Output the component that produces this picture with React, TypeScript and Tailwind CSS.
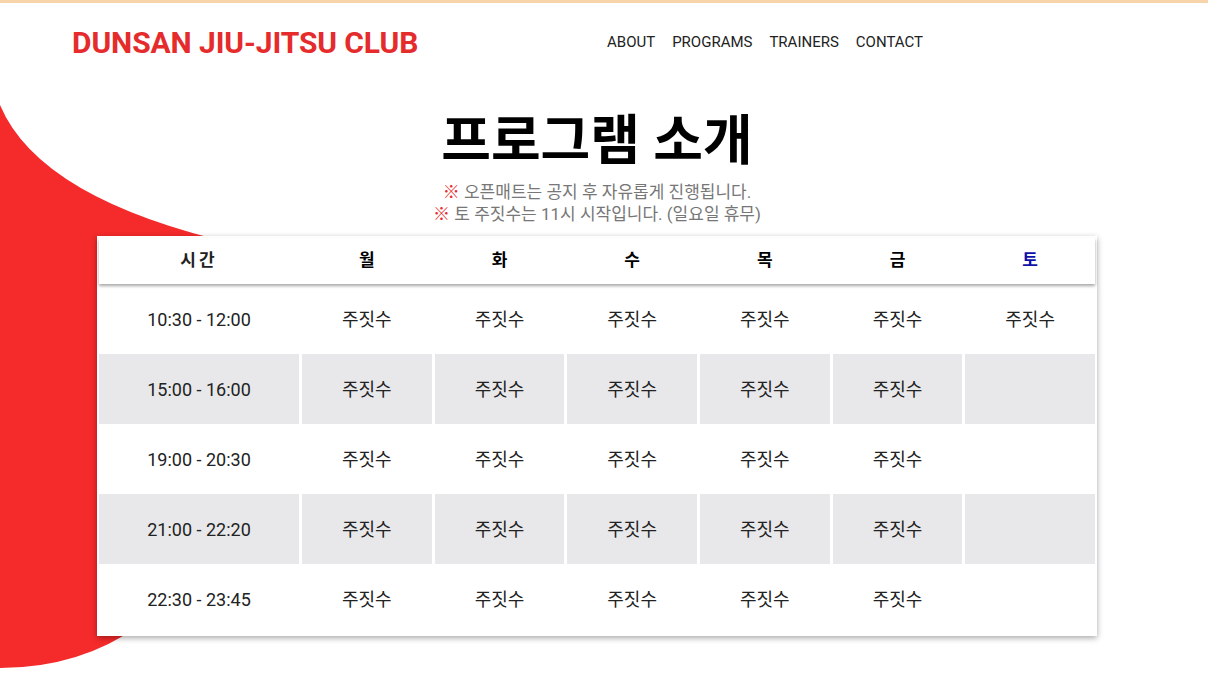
import React from 'react';

const days = ['월', '화', '수', '목', '금', '토'];

const rows: { time: string; sat: boolean }[] = [
  { time: '10:30 - 12:00', sat: true },
  { time: '15:00 - 16:00', sat: false },
  { time: '19:00 - 20:30', sat: false },
  { time: '21:00 - 22:20', sat: false },
  { time: '22:30 - 23:45', sat: false },
];

const font = { fontFamily: 'Roboto, "Noto Sans CJK KR", sans-serif' };

export default function App() {
  return (
    <div
      className="relative min-h-[689px] w-full overflow-hidden border-t-[3px] border-[#f6d3a8] bg-white text-[#222]"
      style={font}
    >
      {/* red blob behind the table */}
      <svg
        className="absolute left-0 top-[-3px]"
        width="320"
        height="689"
        viewBox="0 0 320 689"
      >
        <path
          d="M0 105 Q40 200 240 245 L320 245 L320 610 L140 625 Q80 668 0 668 Z"
          fill="#f52a2a"
        />
      </svg>

      <div className="relative w-[1194px]">
        <header className="grid h-[78px] grid-cols-[607px_1fr] items-center">
          <h1 className="pl-[72px] text-[30px] font-bold tracking-[-0.1px] text-[#e52b2b]">
            DUNSAN JIU-JITSU CLUB
          </h1>
          <nav className="flex items-center gap-[17px] text-[15px] text-[#222]">
            <a>ABOUT</a>
            <a>PROGRAMS</a>
            <a>TRAINERS</a>
            <a>CONTACT</a>
          </nav>
        </header>

        <section className="flex flex-col items-center">
          <h2 className="mt-[30px] text-[54px] font-bold leading-[62px] text-black">
            프로그램 소개
          </h2>
          <div className="mt-[8px] text-center text-[17px] leading-[22px] text-[#777]">
            <p>
              <span className="text-[#e52b2b]">※</span> 오픈매트는 공지 후 자유롭게 진행됩니다.
            </p>
            <p>
              <span className="text-[#e52b2b]">※</span> 토 주짓수는 11시 시작입니다. (일요일 휴무)
            </p>
          </div>

          <div className="mt-[11px] w-[1000px] bg-white p-[2px] shadow-[0_2px_6px_rgba(0,0,0,0.35)]">
            <div className="relative z-10 grid h-[46px] grid-cols-[200px_repeat(6,1fr)] items-center gap-x-[3px] bg-white text-[17px] font-bold shadow-[0_2px_3px_rgba(0,0,0,0.35)]">
              <div className="text-center tracking-[3px]">시간</div>
              {days.map((d) => (
                <div
                  key={d}
                  className={d === '토' ? 'text-center text-[#1010a8]' : 'text-center text-black'}
                >
                  {d}
                </div>
              ))}
            </div>
            {rows.map((r, i) => {
              const gray = i % 2 === 1;
              const cell = gray
                ? 'flex h-[70px] items-center justify-center bg-[#e8e8ea]'
                : 'flex h-[70px] items-center justify-center bg-white';
              return (
                <div
                  key={r.time}
                  className="grid grid-cols-[200px_repeat(6,1fr)] gap-x-[3px] text-[18px]"
                >
                  <div className={cell}>{r.time}</div>
                  {[0, 1, 2, 3, 4].map((k) => (
                    <div key={k} className={cell}>
                      주짓수
                    </div>
                  ))}
                  <div className={cell}>{r.sat ? '주짓수' : ''}</div>
                </div>
              );
            })}
          </div>
        </section>
      </div>
    </div>
  );
}
